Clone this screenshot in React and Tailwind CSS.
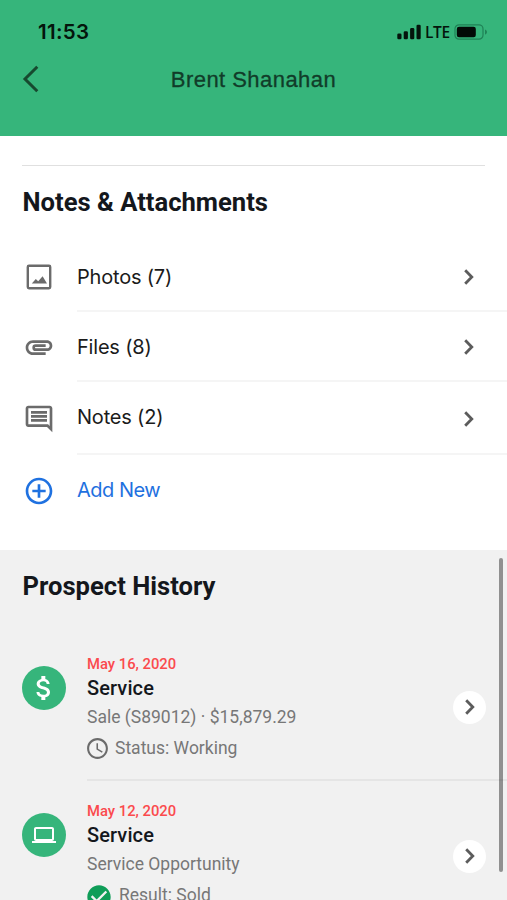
import {
  MdAccessTime,
  MdAttachMoney,
  MdAttachment,
  MdCheckCircle,
  MdControlPoint,
  MdOutlineInsertComment,
  MdOutlineLaptop,
} from "react-icons/md";

function Chevron() {
  return (
    <svg width="12" height="18" viewBox="0 0 12 18" fill="none" className="shrink-0">
      <path d="M2.2 2.2L8.8 9l-6.6 6.8" stroke="#5c5c5c" strokeWidth="2.8" />
    </svg>
  );
}

function PhotoIcon() {
  return (
    <svg width="32" height="32" viewBox="0 0 32 32" fill="none">
      <rect x="4.8" y="4.8" width="22.4" height="22.4" rx="1.2" stroke="#6b6b6b" strokeWidth="2.4" />
      <path d="M8.8 22.6l4-4.6 2.4 2.3 4.4-5 4.4 7.3z" fill="#6b6b6b" />
    </svg>
  );
}

function StatusBar() {
  return (
    <div className="flex h-[62px] items-center justify-between pl-[38px] pr-[19px] pt-[2px]">
      <span className="font-['Inter',sans-serif] text-[20.5px] font-semibold leading-6 tracking-[0.3px] text-[#04150c]">
        11:53
      </span>
      <div className="flex items-center">
        <svg width="24" height="16" viewBox="0 0 24 16" fill="#04150c">
          <rect x="0.3" y="9.5" width="4.2" height="5.8" rx="1.3" />
          <rect x="6.7" y="7.2" width="4.2" height="8.1" rx="1.3" />
          <rect x="13.1" y="4" width="4.2" height="11.3" rx="1.3" />
          <rect x="19.5" y="0.7" width="4.2" height="14.6" rx="1.3" />
        </svg>
        <span className="ml-[4px] w-[25px] font-['Open_Sans',sans-serif] text-[15.5px] font-semibold leading-5 tracking-[-0.4px] text-[#04150c]">
          LTE
        </span>
        <svg width="34" height="16" viewBox="0 0 34 16" className="ml-[4px]">
          <rect x="1" y="0.8" width="28" height="14.4" rx="4" fill="none" stroke="#1f8256" strokeWidth="1.2" />
          <rect x="2.8" y="2.8" width="19" height="10.4" rx="2.2" fill="#020a06" />
          <path d="M31 5.4c2.6 1 2.6 4.2 0 5.2z" fill="#1f8256" />
        </svg>
      </div>
    </div>
  );
}

const attachments = [
  { label: "Photos (7)", icon: <PhotoIcon />, row: "h-[70px]", text: "" },
  { label: "Files (8)", icon: <MdAttachment size={32} />, row: "h-[70px]", text: "" },
  { label: "Notes (2)", icon: <MdOutlineInsertComment size={32} />, row: "h-[73px]", text: "pb-[3px]" },
];

const history = [
  {
    date: "May 16, 2020",
    title: "Service",
    detail: "Sale (S89012) · $15,879.29",
    icon: <MdAttachMoney size={32} />,
    status: "Status: Working",
    statusIcon: <MdAccessTime size={25} className="-ml-[2px] mr-[5px] text-[#6b6b6b]" />,
    button: "mt-[38px]",
  },
  {
    date: "May 12, 2020",
    title: "Service",
    detail: "Service Opportunity",
    icon: <MdOutlineLaptop size={24} />,
    status: "Result: Sold",
    statusIcon: <MdCheckCircle size={28} className="-ml-[2px] mr-[6px] mt-[2px] text-[#0f9d58]" />,
    button: "mt-[40px]",
  },
];

function HistoryItem({ item }) {
  return (
    <div className="flex h-[147px] pl-[22px]">
      <div className="mt-[13px] flex h-[44px] w-[44px] shrink-0 items-center justify-center rounded-full bg-[#36b57b] text-white">
        {item.icon}
      </div>
      <div className="ml-[21px] flex h-[128px] flex-1 border-b-2 border-[#e5e5e5]">
        <div className="flex-1 font-['Roboto',sans-serif]">
          <p className="text-[14.8px] font-medium leading-[22px] text-[#fb4a4d]">{item.date}</p>
          <p className="text-[20px] font-medium leading-[26px] tracking-[0.1px] text-[#14171c]">{item.title}</p>
          <p className="mt-[2px] text-[17.5px] leading-[28px] text-[#777]">{item.detail}</p>
          <div className="mt-[4px] flex h-[28px] items-center text-[17.5px] text-[#777]">
            {item.statusIcon}
            <span>{item.status}</span>
          </div>
        </div>
        <div
          className={`mr-[21px] flex h-[33px] w-[33px] items-center justify-center rounded-full bg-white ${item.button}`}
        >
          <Chevron />
        </div>
      </div>
    </div>
  );
}

export default function App() {
  return (
    <div className="relative flex h-[900px] w-[507px] flex-col overflow-hidden bg-white">
      <header className="h-[135.5px] shrink-0 bg-[#36b57b]">
        <StatusBar />
        <div className="flex h-[34px] items-center pl-[22px]">
          <svg width="18" height="28" viewBox="0 0 18 28" fill="none">
            <path d="M15.3 1.8L3 14l12.3 12.2" stroke="#17492f" strokeWidth="3" />
          </svg>
          <h1 className="flex-1 pr-[40px] text-center font-['Liberation_Sans',sans-serif] text-[22px] tracking-[0.45px] text-[#113c29] [-webkit-text-stroke:0.3px_#113c29]">
            Brent Shanahan
          </h1>
        </div>
      </header>

      {/* Notes & Attachments */}
      <section className="h-[414px] shrink-0 pt-[29px]">
        <div className="mx-[22px] h-[1.5px] bg-[#e0e0e0]" />
        <h2 className="mt-[20px] pl-[22.5px] font-['Roboto',sans-serif] text-[25.6px] font-bold leading-8 text-[#14171c]">
          Notes &amp; Attachments
        </h2>
        <div className="mt-[24px] font-['Inter',sans-serif] text-[20px] tracking-[-0.2px]">
          {attachments.map((item) => (
            <div key={item.label} className={`flex pl-[22.5px] text-[#6b6b6b] ${item.row}`}>
              <div className="flex w-[54.5px] items-center">{item.icon}</div>
              <div className="flex flex-1 items-center justify-between border-b-2 border-[#f5f5f5] pr-[32px] pt-[2px]">
                <span className={`text-[#1b1b1b] ${item.text}`}>{item.label}</span>
                <Chevron />
              </div>
            </div>
          ))}
          <div className="flex h-[72px] items-center pl-[22.5px] text-[#1f71e0]">
            <MdControlPoint size={32} />
            <span className="ml-[22.5px] pb-[2px] tracking-[-0.5px]">Add New</span>
          </div>
        </div>
      </section>

      {/* Prospect History */}
      <section className="flex-1 bg-[#f1f1f1] pt-[20px]">
        <h2 className="pl-[22.5px] font-['Roboto',sans-serif] text-[25.6px] font-bold leading-8 text-[#14171c]">
          Prospect History
        </h2>
        <div className="mt-[51px]">
          {history.map((item) => (
            <HistoryItem key={item.date} item={item} />
          ))}
        </div>
      </section>

      {/* Scroll indicator */}
      <div className="absolute right-[4px] top-[558px] h-[314px] w-[4px] rounded-full bg-black/40" />
    </div>
  );
}
